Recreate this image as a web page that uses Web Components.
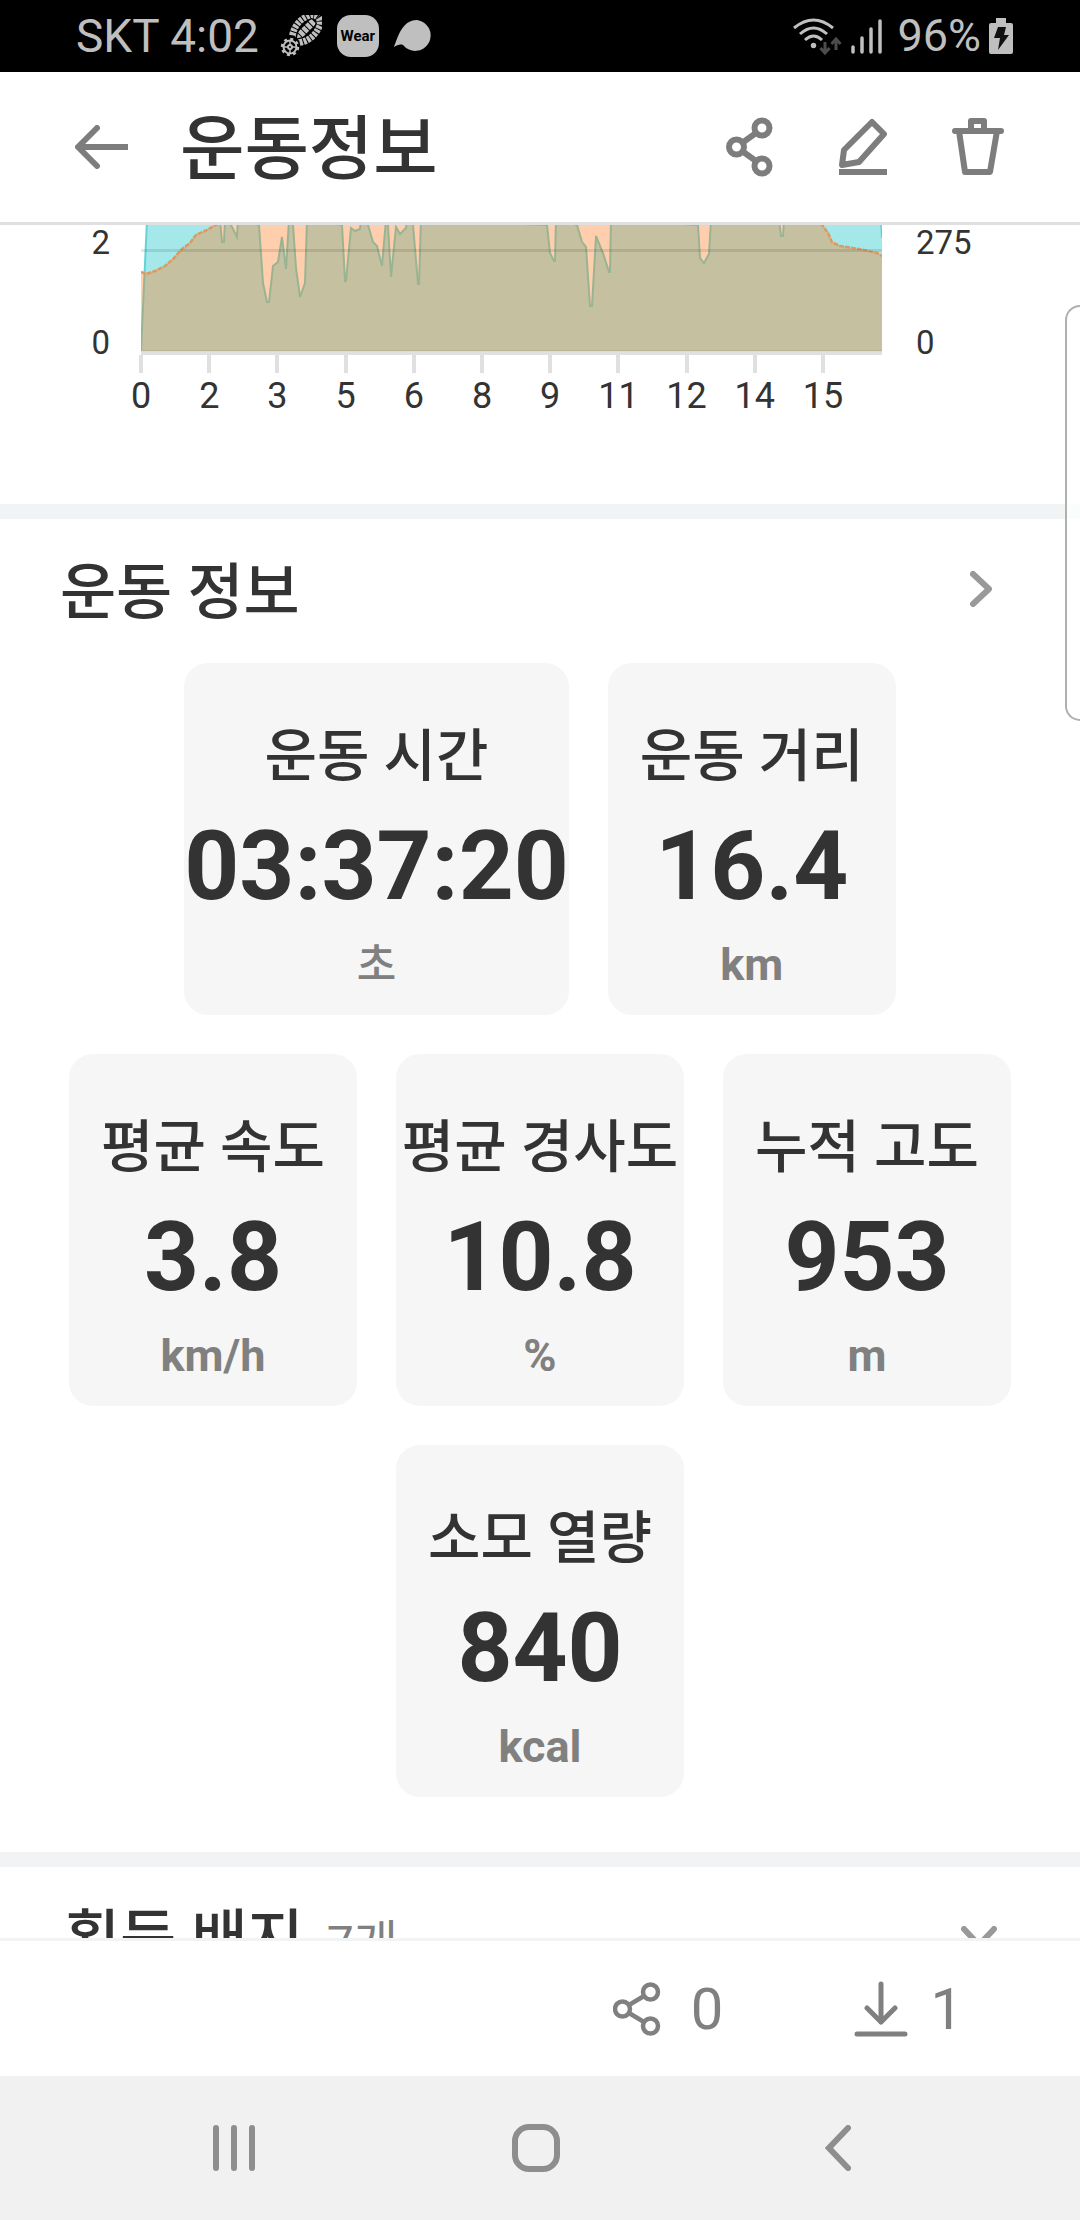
<!DOCTYPE html>
<html lang="ko">
<head>
<meta charset="utf-8">
<meta name="viewport" content="width=device-width, initial-scale=1">
<title>운동정보</title>
<style>
  html, body { height: 100%; margin: 0; }
  body {
    background: #fff;
    color: #333;
    font-family: Roboto, "Noto Sans CJK KR", sans-serif;
  }
</style>
</head>
<body>
<workout-app></workout-app>

<script>
const ICONS = {
  boot: [42, 42, `
    <g fill="none" stroke="currentColor">
      <g transform="translate(26 14) rotate(-45)">
        <path d="M-14 -5Q-2 -13 12 -7Q17 -4 17 0" stroke-width="7" stroke-dasharray="3 1"/>
        <path d="M-14 5Q-2 13 12 7Q17 4 17 0" stroke-width="7" stroke-dasharray="3 1"/>
        <path d="M-13 0H12" stroke-width="7" stroke-dasharray="4 1"/>
        <path d="M-14 0Q-2 -10 12 -3M-14 0Q-2 10 12 3" stroke="#000" stroke-width="1.500"/>
      </g>
      <circle cx="10" cy="32" r="6.500" stroke-width="2"/>
      <circle cx="10" cy="32" r="8" stroke-width="2.500" stroke-dasharray="3 3.280"/>
      <circle cx="10" cy="32" r="2" stroke-width="2"/>
      <path d="M10 26v4M10 34v4M4 32h4M12 32h4" stroke-width="1.500"/>
    </g>`],
  bubble: [38, 32, '<path fill="currentColor" d="M0 27C4 17 8 0 23 0a15.500 15.500 0 1 1-14 25C6 24 3 25 0 27z"/>'],
  wifi: [49, 37, `
    <g fill="none" stroke="currentColor" stroke-width="3">
      <path d="M1 10Q20.500 -6 40 10M7 16Q20.500 4 34 16M12 22Q20.500 14 29 22"/>
    </g>
    <circle cx="20.500" cy="27.500" r="2.700" fill="currentColor"/>
    <g fill="none" stroke="#4c4c4c" stroke-width="3">
      <path d="M32 24v11M27.500 30l4.500 5 4.500-5M43 32V21M38.500 26l4.500-5 4.500 5"/>
    </g>`],
  signal: [32, 36, '<path d="M3 29v5M12 20v14M21 11v23M30 3v31" stroke="currentColor" stroke-width="3.500" stroke-linecap="round"/>'],
  battery: [24, 36, '<path fill="currentColor" d="M7 0h10v5h5q2 0 2 2v27q0 2-2 2H2q-2 0-2-2V7q0-2 2-2h5z"/><path fill="#111" d="M9 9h8l-2 8h5L9 32l2-12H5z"/>'],
  back: [53, 44, '<path d="M53 22H4M22 3L3 22L22 41" fill="none" stroke="currentColor" stroke-width="6" stroke-linecap="round" stroke-linejoin="round"/>'],
  share: [48, 60, `
    <g fill="none" stroke="currentColor" stroke-width="6">
      <circle cx="36" cy="11" r="7.500"/><circle cx="10.500" cy="30" r="7.500"/><circle cx="36" cy="49" r="7.500"/>
      <path d="M30 16L16 26M16 34L30 44"/>
    </g>`],
  shareThin: [48, 54, `
    <g fill="none" stroke="currentColor" stroke-width="4.500">
      <circle cx="37.500" cy="10" r="7.500"/><circle cx="9.500" cy="27" r="7.500"/><circle cx="37.500" cy="44" r="7.500"/>
      <path d="M31 14L16 23M16 31L31 40"/>
    </g>`],
  edit: [48, 58, '<path d="M33 4L45 16L20 44L3 47L5 32z" fill="none" stroke="currentColor" stroke-width="6" stroke-linejoin="round"/><path d="M0 54h48" stroke="currentColor" stroke-width="6"/>'],
  trash: [52, 58, '<path d="M3 13H49M19 13V3H32V13M7 13L13 54H38L45 13" fill="none" stroke="currentColor" stroke-width="6" stroke-linecap="round" stroke-linejoin="round"/>'],
  right: [22, 36, '<path d="M3 3L19 18L3 33" fill="none" stroke="currentColor" stroke-width="6" stroke-linecap="round" stroke-linejoin="round"/>'],
  down: [36, 22, '<path d="M3 3L18 19L33 3" fill="none" stroke="currentColor" stroke-width="6" stroke-linecap="round" stroke-linejoin="round"/>'],
  download: [54, 56, '<path d="M27 3V41M13 27L27 41L41 27M3 53H51" fill="none" stroke="currentColor" stroke-width="5" stroke-linecap="round" stroke-linejoin="round"/>'],
  recents: [42, 46, '<path d="M3 3V43M21 3V43M39 3V43" stroke="currentColor" stroke-width="6" stroke-linecap="round"/>'],
  home: [48, 48, '<rect x="3" y="3" width="42" height="42" rx="14" fill="none" stroke="currentColor" stroke-width="6"/>'],
  navBack: [26, 46, '<path d="M23 3L4 23L23 43" fill="none" stroke="currentColor" stroke-width="6" stroke-linecap="round" stroke-linejoin="miter"/>']
};

/**
 * Inline icon, picked by its name.
 * @element app-icon
 */
class AppIcon extends HTMLElement {
  constructor() {
    super();
    this.attachShadow({ mode: 'open' });
  }

  connectedCallback() {
    const [WIDTH, HEIGHT, SHAPES] = ICONS[this.getAttribute('name')];
    this.shadowRoot.innerHTML = `
      <style>
        :host { display: inline-flex; flex: none; }
        svg { display: block; }
      </style>
      <svg width="${WIDTH}" height="${HEIGHT}" viewBox="0 0 ${WIDTH} ${HEIGHT}" aria-hidden="true">${SHAPES}</svg>
    `;
  }
}

/**
 * Phone status bar.
 * @element status-bar
 */
class StatusBar extends HTMLElement {
  constructor() {
    super();
    this.attachShadow({ mode: 'open' });
    this.shadowRoot.innerHTML = `
      <style>
        :host {
          display: flex;
          justify-content: space-between;
          flex: none;
          height: 72px;
          padding: 0 67px 0 76px;
          background: #000;
          color: #bfbfbf;
          font-size: 45px;
          line-height: 72px;
        }
        div { display: flex; align-items: center; }
        .left { gap: 15px; }
        .clock { margin-right: 6px; font-size: 46px; }
        .wear {
          width: 42px;
          border-radius: 14px;
          background: #bfbfbf;
          color: #000;
          font-size: 15px;
          font-weight: 700;
          line-height: 42px;
          text-align: center;
        }
        .right { gap: 8px; }
        .percent { margin-left: 7px; }
      </style>
      <div class="left">
        <span class="clock">SKT 4:02</span>
        <app-icon name="boot"></app-icon>
        <span class="wear">Wear</span>
        <app-icon name="bubble"></app-icon>
      </div>
      <div class="right">
        <app-icon name="wifi"></app-icon>
        <app-icon name="signal"></app-icon>
        <span class="percent">96%</span>
        <app-icon name="battery"></app-icon>
      </div>
    `;
  }
}

/**
 * Page header: back button, title, actions.
 * @element page-header
 */
class PageHeader extends HTMLElement {
  constructor() {
    super();
    this.attachShadow({ mode: 'open' });
    this.shadowRoot.innerHTML = `
      <style>
        :host {
          display: flex;
          align-items: center;
          flex: none;
          height: 150px;
          padding: 0 76px 0 75px;
          border-bottom: 3px solid #e0e0e0;
          background: #fff;
        }
        h1 {
          flex: 1;
          margin: 0 0 0 52px;
          padding-top: 6px;
          font-size: 70px;
          font-weight: 500;
          line-height: 104px;
        }
        .actions { display: flex; align-items: center; gap: 65px; }
        button { display: flex; padding: 0; border: 0; background: none; color: #7d7d7d; }
      </style>
      <button type="button" aria-label="뒤로"><app-icon name="back"></app-icon></button>
      <h1><slot></slot></h1>
      <div class="actions">
        <button type="button" aria-label="공유"><app-icon name="share"></app-icon></button>
        <button type="button" aria-label="편집"><app-icon name="edit"></app-icon></button>
        <button type="button" aria-label="삭제"><app-icon name="trash"></app-icon></button>
      </div>
    `;
  }
}

/**
 * Lower part of the speed / altitude chart.
 * @element workout-chart
 */
class WorkoutChart extends HTMLElement {
  constructor() {
    super();
    this.attachShadow({ mode: 'open' });

    this.TICKS = [0, 2, 3, 5, 6, 8, 9, 11, 12, 14, 15];
    this.ALTITUDE = '0,47 5,49 14,46 24,41 32,34 41,24 49,18 55,10 66,5 75,0 90,-9 670,-9 681,0 687,8 691,17 699,21 718,24 736,28 741,31';
    this.SPEED = `0,126 6,-5 79,-5 81,17 83,17 84,-5 90,0 96,12 97,-5 118,0 122,58 126,77 128,77 132,41 137,37 141,12
      145,44 148,-5 152,0 155,43 159,72 164,58 166,-5 201,0 204,56 205,56 210,3 214,6 219,4 220,-5 227,0 232,17
      236,21 241,41 245,-5 247,0 250,52 255,2 259,9 265,3 266,-5 272,0 277,59 278,59 280,-5 406,0 409,28 413,36 414,36
      415,-5 436,0 441,17 445,22 449,81 451,81 455,11 462,28 468,47 469,47 470,-5 557,0 559,33 563,38 568,29
      570,-5 638,-5 640,11 642,11 643,-5 740,-5 741,13`;

    this.shadowRoot.innerHTML = `
      <style>
        :host {
          display: grid;
          grid-template-columns: 110px 1fr 167px;
          column-gap: 31px;
          padding-bottom: 88px;
          color: #333;
        }
        .axis {
          display: flex;
          flex-direction: column;
          height: 130px;
          font-size: 33px;
          line-height: 36px;
          gap: 64px;
        }
        .left { text-align: right; }
        .right { margin-left: 3px; }
        svg { display: block; width: 100%; height: 130px; overflow: hidden; }
        /* each cell is centred on its tick, so the row starts half a cell early */
        .ticks {
          grid-column: 2;
          display: flex;
          margin: 0 25px 0 -34px;
        }
        .ticks span {
          display: flex;
          flex-direction: column;
          align-items: center;
          flex: 1 1 0;
          gap: 3px;
          font-size: 36px;
          line-height: 40px;
        }
        .ticks span::before { content: ""; width: 4px; height: 18px; background: #e0e0e0; }
      </style>
      <div class="axis left"><span>2</span><span>0</span></div>
      <svg viewBox="0 0 741 130" preserveAspectRatio="none" role="img" aria-label="속도 고도">
        <polygon points="${this.SPEED} 741,126" fill="#a4e8ea"/>
        <polyline points="${this.SPEED}" fill="none" stroke="#62d4d6" stroke-width="2"/>
        <polygon points="${this.ALTITUDE} 741,126 0,126" fill="rgba(255,121,28,.36)"/>
        <polyline points="${this.ALTITUDE}" fill="none" stroke="#dc9a62" stroke-width="2.500" stroke-dasharray="5 1"/>
        <path d="M0 25.500H741" stroke="#000" stroke-opacity=".1" stroke-width="3"/>
        <path d="M0 126H741" stroke="#b0ab90" stroke-width="1"/>
        <path d="M0 128.500H741" stroke="#e0e0e0" stroke-width="4"/>
      </svg>
      <div class="axis right"><span>275</span><span>0</span></div>
      <div class="ticks">${this.TICKS.map((TICK) => `<span>${TICK}</span>`).join('')}</div>
    `;
  }
}

/**
 * Section title row with a chevron button.
 * @element section-head
 */
class SectionHead extends HTMLElement {
  constructor() {
    super();
    this.attachShadow({ mode: 'open' });
  }

  connectedCallback() {
    this.shadowRoot.innerHTML = `
      <style>
        :host {
          display: flex;
          align-items: center;
          justify-content: space-between;
          height: 144px;
          border-top: 15px solid #f1f3f5;
        }
        h2 { margin: 0; padding-top: 4px; font-size: 61px; font-weight: 500; line-height: 92px; }
        button { display: flex; padding: 0 0 4px; border: 0; background: none; color: #999; }
        ::slotted(small) { margin-left: 8px; color: #808080; font-size: 48px; font-weight: 400; }
      </style>
      <h2><slot></slot></h2>
      <button type="button" aria-label="${this.getAttribute('action')}"><app-icon name="${this.getAttribute('icon')}"></app-icon></button>
    `;
  }
}

/**
 * One measured value.
 * @element stat-card
 */
class StatCard extends HTMLElement {
  constructor() {
    super();
    this.attachShadow({ mode: 'open' });
  }

  connectedCallback() {
    this.shadowRoot.innerHTML = `
      <style>
        :host {
          display: flex;
          flex-direction: column;
          align-items: center;
          box-sizing: border-box;
          min-width: 288px;
          padding: 52px 0 18px;
          border-radius: 24px;
          background: #f6f6f6;
          white-space: nowrap;
        }
        .label { font-size: 57px; font-weight: 500; line-height: 84px; }
        .value { font-size: 96px; font-weight: 700; line-height: 134px; }
        .unit { color: #808080; font-size: 45px; font-weight: 700; line-height: 64px; }
        .unit:lang(ko) { font-size: 43px; font-weight: 500; }
      </style>
      <span class="label">${this.getAttribute('label')}</span>
      <span class="value">${this.getAttribute('value')}</span>
      <span class="unit" lang="${this.hasAttribute('korean-unit') ? 'ko' : 'en'}">${this.getAttribute('unit')}</span>
    `;
  }
}

/**
 * Share and download counters.
 * @element action-bar
 */
class ActionBar extends HTMLElement {
  constructor() {
    super();
    this.attachShadow({ mode: 'open' });
    this.shadowRoot.innerHTML = `
      <style>
        :host {
          display: flex;
          align-items: center;
          justify-content: flex-end;
          flex: none;
          gap: 131px;
          height: 135px;
          padding-right: 117px;
          border-top: 3px solid #f1f3f5;
          background: #fff;
        }
        button {
          display: flex;
          align-items: center;
          gap: 30px;
          padding: 0;
          border: 0;
          background: none;
          color: #808080;
          font: 400 58px/70px Roboto, sans-serif;
        }
        .download { gap: 22px; }
      </style>
      <button type="button" aria-label="공유 0"><app-icon name="shareThin"></app-icon>0</button>
      <button type="button" class="download" aria-label="다운로드 1"><app-icon name="download"></app-icon>1</button>
    `;
  }
}

/**
 * System navigation buttons.
 * @element nav-bar
 */
class NavBar extends HTMLElement {
  constructor() {
    super();
    this.attachShadow({ mode: 'open' });
    this.shadowRoot.innerHTML = `
      <style>
        :host { display: flex; flex: none; height: 144px; padding: 0 91px 0 83px; background: #f1f1f1; }
        button {
          display: flex;
          align-items: center;
          justify-content: center;
          flex: 1;
          padding: 0;
          border: 0;
          background: none;
          color: #8e8e8e;
        }
      </style>
      <button type="button" aria-label="최근 앱"><app-icon name="recents"></app-icon></button>
      <button type="button" aria-label="홈"><app-icon name="home"></app-icon></button>
      <button type="button" aria-label="이전"><app-icon name="navBack"></app-icon></button>
    `;
  }
}

/**
 * Whole workout screen.
 * @element workout-app
 */
class WorkoutApp extends HTMLElement {
  constructor() {
    super();
    this.attachShadow({ mode: 'open' });
    this.shadowRoot.innerHTML = `
      <style>
        :host { display: flex; flex-direction: column; height: 100vh; }
        main { flex: 1; min-height: 0; overflow: hidden; }
        .info { padding: 0 88px 0 60px; }
        .badges { padding: 0 83px 0 64px; }
        .stats {
          display: flex;
          flex-wrap: wrap;
          justify-content: center;
          gap: 39px;
          padding: 0 60px 55px;
        }
        /* system edge panel, lies over the page */
        .edge {
          position: fixed;
          top: 305px;
          right: 0;
          box-sizing: border-box;
          width: 15px;
          height: 416px;
          border: 2px solid #b0b0b0;
          border-right: 0;
          border-radius: 16px 0 0 16px;
          background: rgba(255, 255, 255, .7);
        }
      </style>
      <status-bar></status-bar>
      <page-header>운동정보</page-header>
      <main>
        <workout-chart></workout-chart>
        <section>
          <section-head class="info" icon="right" action="자세히">운동 정보</section-head>
          <div class="stats">
            <stat-card label="운동 시간" value="03:37:20" unit="초" korean-unit></stat-card>
            <stat-card label="운동 거리" value="16.4" unit="km"></stat-card>
            <stat-card label="평균 속도" value="3.8" unit="km/h"></stat-card>
            <stat-card label="평균 경사도" value="10.8" unit="%"></stat-card>
            <stat-card label="누적 고도" value="953" unit="m"></stat-card>
            <stat-card label="소모 열량" value="840" unit="kcal"></stat-card>
          </div>
        </section>
        <section>
          <section-head class="badges" icon="down" action="펼치기">획득 배지 <small>7개</small></section-head>
        </section>
      </main>
      <action-bar></action-bar>
      <nav-bar></nav-bar>
      <div class="edge"></div>
    `;
  }
}

customElements.define('app-icon', AppIcon);
customElements.define('status-bar', StatusBar);
customElements.define('page-header', PageHeader);
customElements.define('workout-chart', WorkoutChart);
customElements.define('section-head', SectionHead);
customElements.define('stat-card', StatCard);
customElements.define('action-bar', ActionBar);
customElements.define('nav-bar', NavBar);
customElements.define('workout-app', WorkoutApp);
</script>
</body>
</html>
